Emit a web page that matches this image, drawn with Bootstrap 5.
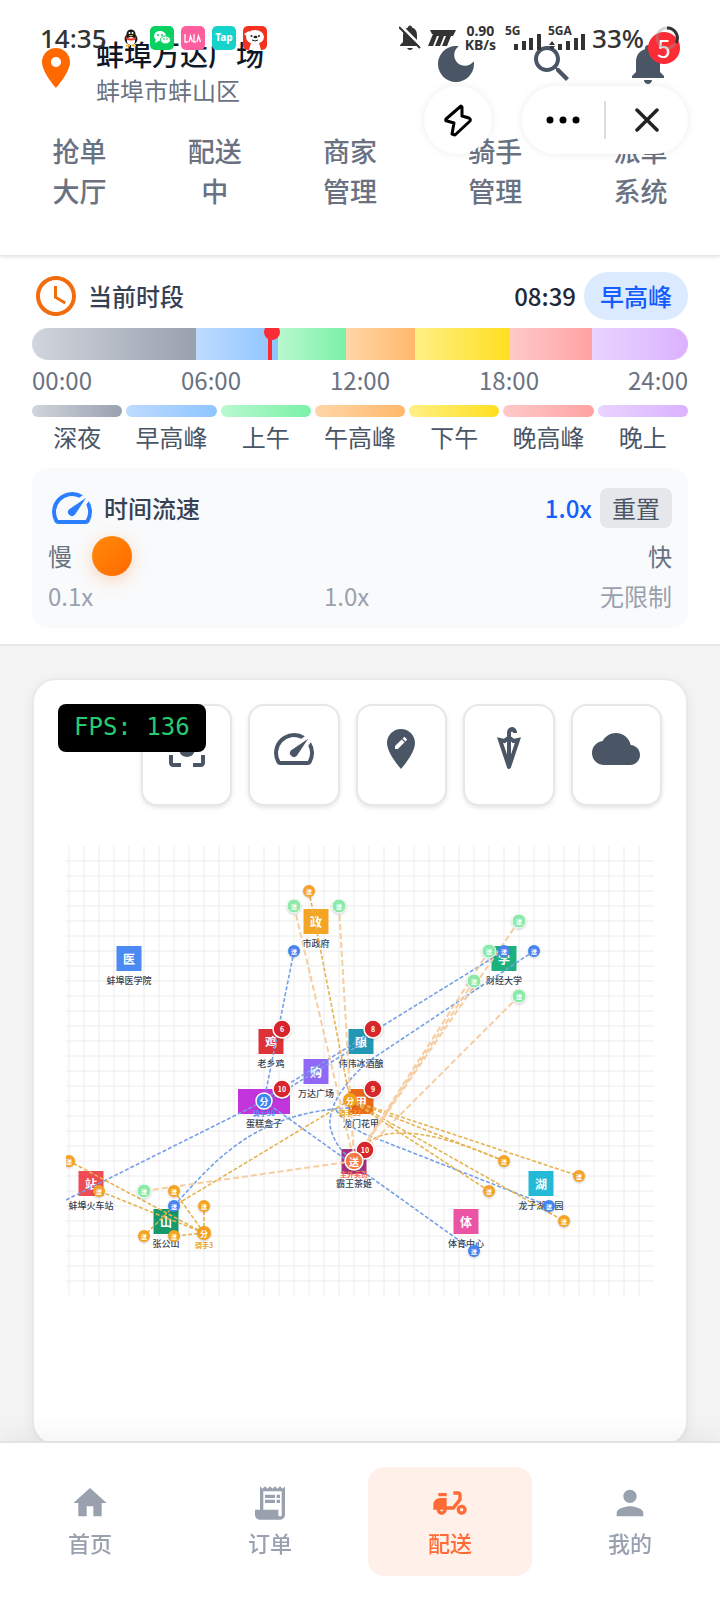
<!DOCTYPE html>
<html lang="zh-CN">
<head>
<meta charset="utf-8">
<meta name="viewport" content="width=device-width, initial-scale=1">
<title>配送</title>
<link rel="stylesheet" href="https://cdn.jsdelivr.net/npm/bootstrap@5.3.0/dist/css/bootstrap.min.css">
<style>
  body { background: #f3f3f3; color: #364153; font: 24px/36px "Noto Sans CJK SC", sans-serif; padding-bottom: 154px; }
  button { font: inherit; }
  .ico { width: 48px; height: 48px; fill: currentColor; flex: none; display: block; }
  .fw-mid { font-weight: 500; }

  /* system status strip, drawn over the page header */
  .status-strip { top: 24px; left: 0; right: 0; height: 28px; padding: 0 40px; z-index: 30; color: #333; font-family: "Noto Sans", sans-serif; font-weight: 500; font-size: 26px; line-height: 28px; pointer-events: none; }
  .app-row { gap: 7px; margin-left: 12px; }
  .app-row svg { width: 24px; height: 24px; }
  .net-speed { font-size: 14px; line-height: 14px; font-weight: 700; text-align: center; margin-left: 8px; }
  .signals { margin-left: 8px; }
  .battery-ring { margin-left: 10px; }

  /* header */
  .top-area { background: #fff; border-bottom: 1px solid #e5e7eb; box-shadow: 0 1px 4px rgba(0,0,0,.12); z-index: 2; }
  .place-row { padding: 36px 32px 0; }
  .place-name { font-size: 28px; font-weight: 500; color: #101828; }
  .place-sub { color: #6a7282; }
  .act { width: 80px; height: 48px; border: 0; background: none; padding: 0 16px; color: #4a5565; }
  .count-dot { top: -8px; right: 8px; width: 32px; height: 32px; border-radius: 50%; background: #fb2c36; color: #fff; line-height: 32px; text-align: center; }
  .tab-row { display: grid; grid-template-columns: 27fr 27fr 27fr 31fr 27fr; padding: 23px 12px 44px; }
  .tab-row a { color: #6a7282; font-size: 27px; line-height: 40px; font-weight: 500; text-align: center; text-decoration: none; }
  .floaters { top: 86px; right: 32px; gap: 30px; z-index: 20; }
  .float-pill { background: #fff; height: 68px; border-radius: 34px; box-shadow: 0 0 10px rgba(0,0,0,.08); }
  .float-pill button { border: 0; background: none; padding: 0; height: 68px; display: grid; place-items: center; }
  .float-round { width: 68px; }
  .float-wide { width: 166px; }
  .float-wide button { flex: 1; }
  .float-wide i { width: 2px; height: 38px; background: #dcdcdc; }

  /* day timeline */
  .time-area { background: #fff; border-bottom: 2px solid #e5e7eb; padding: 16px 32px; }
  .c-clock { color: #f26c0c; }
  .clock-now { color: #1e2939; font-weight: 500; }
  .phase-pill { background: #dbeafe; color: #155dfc; border-radius: 24px; padding: 6px 16px; font-weight: 500; }
  .day-bar { height: 32px; border-radius: 16px; overflow: hidden; }
  .needle { top: 0; width: 4px; height: 100%; background: #fb2c36; }
  .needle::before { content: ""; position: absolute; top: -4px; left: -4px; width: 16px; height: 16px; border-radius: 50%; background: #fb2c36; }
  .hours { color: #6a7282; margin-top: 2px; }
  .legend-grid { display: grid; grid-template-columns: repeat(7, 1fr); gap: 4px; margin-top: 7px; text-align: center; color: #4a5565; }
  .swatch { height: 12px; border-radius: 6px; margin-bottom: 2px; }
  .g-night { background: linear-gradient(90deg, #d1d5dc, #99a1af); }
  .g-rush { background: linear-gradient(90deg, #bedbff, #8ec5ff); }
  .g-morn { background: linear-gradient(90deg, #b9f8cf, #7bf1a8); }
  .g-noon { background: linear-gradient(90deg, #ffd6a8, #ffb86a); }
  .g-aft { background: linear-gradient(90deg, #fff085, #ffdf20); }
  .g-eve { background: linear-gradient(90deg, #ffc9c9, #ffa2a2); }
  .g-late { background: linear-gradient(90deg, #e9d4ff, #dab2ff); }

  /* speed panel */
  .speed-panel { background: #f9fafb; border-radius: 16px; padding: 16px; margin-top: 13px; }
  .c-blue { color: #2b7fff; }
  .rate { color: #155dfc; font-weight: 500; }
  .reset { border: 0; border-radius: 8px; background: #e5e7eb; color: #4a5565; padding: 2px 12px; }
  .slide-row { height: 48px; gap: 20px; color: #6a7282; }
  .slide-row input { flex: 1; min-width: 0; height: 40px; margin: 0; appearance: none; -webkit-appearance: none; background: transparent; }
  .slide-row input::-webkit-slider-thumb { -webkit-appearance: none; width: 40px; height: 40px; border-radius: 50%; background: linear-gradient(135deg, #ff8c0a, #ff6900); box-shadow: 0 4px 16px rgba(255,105,0,.25); }
  .slide-row input::-moz-range-thumb { width: 40px; height: 40px; border: 0; border-radius: 50%; background: #ff7a05; }
  .scale-row { color: #99a1af; line-height: 32px; }

  /* map card */
  .map-card { margin: 32px 32px 0; background: #fff; border: 2px solid #e9e9eb; border-radius: 24px; padding: 24px 24px 148px; box-shadow: 0 4px 12px rgba(0,0,0,.06); }
  .tool-row { display: grid; grid-template-columns: repeat(5, 1fr); gap: 16px; margin-left: 83px; }
  .tool-row button { height: 102px; border: 2px solid #e5e7eb; border-radius: 16px; background: #fff; color: #4a5565; padding: 0 0 12px; display: grid; place-items: center; box-shadow: 0 2px 4px rgba(0,0,0,.1); }
  .fps { top: 24px; left: 24px; background: #000; color: #25cb72; border-radius: 8px; padding: 5px 16px 7px; font-family: "DejaVu Sans Mono", monospace; z-index: 2; }
  .map { margin: 40px 8px 0; }
  .map svg { display: block; width: 100%; }
  .map text { text-anchor: middle; dominant-baseline: central; }

  /* bottom navigation */
  .dock { background: #fff; border-top: 2px solid #e2e3e6; padding: 24px 0; box-shadow: 0 -6px 24px rgba(0,0,0,.05); }
  .dock a { flex: 1; margin: 0 8px; height: 109px; padding-top: 16px; border-radius: 16px; color: #99a1af; font-size: 22px; line-height: 34px; font-weight: 500; text-decoration: none; }
  .dock a.on { background: #fff0e9; color: #ff6b35; }
  .dock .ico { width: 40px; height: 40px; margin-bottom: 2px; }
</style>
</head>
<body class="position-relative">

<div class="status-strip position-absolute d-flex align-items-center">
  <span>14:35</span>
  <div class="app-row d-flex">
    <svg viewBox="0 0 24 24"><ellipse cx="12" cy="13" rx="6.500" ry="6" fill="#222"/><circle cx="12" cy="8" r="4.500" fill="#181818"/><ellipse cx="12" cy="15" rx="4" ry="4" fill="#fff"/><path d="M7 11q5 3 10 0v2q-5 3-10 0z" fill="#e32"/><circle cx="10.500" cy="7" r="1" fill="#fff"/><circle cx="13.500" cy="7" r="1" fill="#fff"/><path d="M9.500 9h5l-2.500 1.500zM7 19h4v1.500H7zM13 19h4v1.500h-4z" fill="#fb0"/></svg>
    <svg viewBox="0 0 24 24"><rect width="24" height="24" rx="5" fill="#07d160"/><ellipse cx="10" cy="10" rx="6" ry="5" fill="#fff"/><path d="M6 13l-1 4 4-2z" fill="#fff"/><ellipse cx="15.500" cy="14" rx="5" ry="4" fill="#fff" stroke="#07d160"/><g fill="#07d160"><circle cx="8" cy="9" r="1"/><circle cx="12" cy="9" r="1"/><circle cx="14" cy="13" r=".8"/><circle cx="17" cy="13" r=".8"/></g></svg>
    <svg viewBox="0 0 24 24"><rect width="24" height="24" rx="5" fill="#ff5f9e"/><path d="M4 8v8h3M8 16l1.500-6 2 6M13 8v8h2M16 16l1.500-6 2 6" fill="none" stroke="#fff" stroke-width="1.300"/></svg>
    <svg viewBox="0 0 24 24"><rect width="24" height="24" rx="5" fill="#15d3ca"/><text x="12" y="15" font-size="10" font-weight="800" fill="#fff" text-anchor="middle">Tap</text></svg>
    <svg viewBox="0 0 24 24"><rect width="24" height="24" rx="5" fill="#f2321e"/><ellipse cx="12" cy="11" rx="9" ry="7" fill="#fff"/><path d="M1 8l5-3v7zM8 17h8l2 7H6z" fill="#fff"/><circle cx="8.500" cy="10" r="1" fill="#222"/><circle cx="16" cy="10" r="1" fill="#222"/><ellipse cx="12.500" cy="11" rx="2" ry="1.200" fill="#222"/><path d="M9 14q3 2 6 0" fill="none" stroke="#222"/></svg>
  </div>
  <div class="ms-auto d-flex align-items-center">
    <svg width="58" height="28" viewBox="0 0 58 28" fill="#333"><path d="M4 18V11q0-6 5-7.500 0-2 2-2t2 2q5 1.500 5 7.500v7l3 3v1H1v-1zM8 24h6q-1 2-3 2t-3-2z"/><path d="M2 2l22 22" stroke="#fff" stroke-width="3"/><path d="M0 3l21 21" stroke="#333" stroke-width="2"/><path d="M31 6h26l-3 6h-2l-4 10h-5l4-10h-2l-4 10h-5l4-10h-2l-4 10h-5l5-12h-1z"/></svg>
    <div class="net-speed">0.90<br>KB/s</div>
    <svg class="signals" width="84" height="28" viewBox="0 0 84 28" fill="#333"><text x="1" y="11" font-size="12" font-weight="700">5G</text><path d="M10 20h4v6h-4zM18 17h4v9h-4zM25 14h4v12h-4zM33 10h4v16h-4z"/><text x="44" y="11" font-size="12" font-weight="700">5GA</text><path d="M54 20h4v6h-4zM62 17h4v9h-4zM70 14h4v12h-4zM77 10h4v16h-4zM48 17l3 4h-6zM48 26l3-4h-6z"/></svg>
    <span class="ms-1">33%</span>
    <svg class="battery-ring" width="26" height="28" viewBox="0 0 26 28" fill="none" stroke-width="3"><circle cx="13" cy="14" r="10" stroke="#999" stroke-opacity=".4"/><path d="M13 4A10 10 0 0 1 22 19" stroke="#333"/></svg>
  </div>
</div>

<div class="floaters position-absolute d-flex">
  <div class="float-pill float-round"><button class="w-100" aria-label="快捷"><svg width="30" height="34" viewBox="0 0 30 34" fill="none" stroke="#000" stroke-width="3" stroke-linejoin="round"><path d="M18 3L3 16q-1 2 1 2l7 2-2 11 3 1L27 18q1-2-1-3l-7-2V4z"/></svg></button></div>
  <div class="float-pill float-wide d-flex align-items-center">
    <button aria-label="更多"><svg width="34" height="10" viewBox="0 0 34 10"><circle cx="4" cy="5" r="3.500"/><circle cx="17" cy="5" r="3.500"/><circle cx="30" cy="5" r="3.500"/></svg></button>
    <i></i>
    <button aria-label="关闭"><svg width="24" height="24" viewBox="0 0 24 24" stroke="#222" stroke-width="3.500" stroke-linecap="round"><path d="M2 2l20 20M22 2L2 22"/></svg></button>
  </div>
</div>

<header class="top-area position-relative">
  <div class="place-row d-flex justify-content-between">
    <div class="d-flex align-items-start">
      <svg class="ico mt-2" style="color:#ff6900" viewBox="0 0 24 24"><path d="M12 2C8.130 2 5 5.130 5 9c0 5.250 7 13 7 13s7-7.750 7-13c0-3.870-3.130-7-7-7zm0 9.500c-1.380 0-2.500-1.120-2.500-2.500s1.120-2.500 2.500-2.500 2.500 1.120 2.500 2.500-1.120 2.500-2.500 2.500z"/></svg>
      <div class="ms-3">
        <div class="place-name">蚌埠万达广场</div>
        <div class="place-sub">蚌埠市蚌山区</div>
      </div>
    </div>
    <div class="d-flex gap-3 pt-1">
      <button class="act" aria-label="夜间模式"><svg class="ico" viewBox="0 0 24 24"><path d="M12 3c-4.970 0-9 4.030-9 9s4.030 9 9 9 9-4.030 9-9c0-.46-.04-.92-.1-1.360-.98 1.370-2.580 2.260-4.400 2.260-2.980 0-5.400-2.420-5.400-5.400 0-1.810.89-3.420 2.260-4.400-.44-.06-.9-.1-1.360-.1z"/></svg></button>
      <button class="act" aria-label="搜索"><svg class="ico" viewBox="0 0 24 24"><path d="M15.500 14h-.79l-.28-.27C15.410 12.590 16 11.110 16 9.500 16 5.910 13.090 3 9.500 3S3 5.910 3 9.500 5.910 16 9.500 16c1.610 0 3.090-.59 4.230-1.570l.27.28v.79l5 4.990L20.490 19l-4.990-5zm-6 0C7.010 14 5 11.990 5 9.500S7.010 5 9.500 5 14 7.010 14 9.500 11.990 14 9.500 14z"/></svg></button>
      <button class="act position-relative" aria-label="通知"><svg class="ico" viewBox="0 0 24 24"><path d="M12 22c1.100 0 2-.9 2-2h-4c0 1.100.89 2 2 2zm6-6v-5c0-3.070-1.640-5.640-4.500-6.320V4c0-.83-.67-1.500-1.500-1.500s-1.500.67-1.500 1.500v.68C7.630 5.360 6 7.920 6 11v5l-2 2v1h16v-1l-2-2z"/></svg><span class="count-dot position-absolute">5</span></button>
    </div>
  </div>
  <nav class="tab-row">
    <a href="#">抢单<br>大厅</a><a href="#">配送<br>中</a><a href="#">商家<br>管理</a><a href="#">骑手<br>管理</a><a href="#">派单<br>系统</a>
  </nav>
</header>

<section class="time-area">
  <div class="d-flex align-items-center justify-content-between mb-2">
    <div class="d-flex align-items-center gap-2 fw-mid">
      <svg class="ico c-clock" viewBox="0 0 24 24"><path d="M11.990 2C6.470 2 2 6.480 2 12s4.470 10 9.990 10C17.520 22 22 17.520 22 12S17.520 2 11.990 2zM12 20c-4.420 0-8-3.580-8-8s3.580-8 8-8 8 3.580 8 8-3.580 8-8 8zm.5-13H11v6l5.250 3.150.75-1.230-4.500-2.670z"/></svg>
      <span>当前时段</span>
    </div>
    <div class="d-flex align-items-center gap-2">
      <span class="clock-now">08:39</span><span class="phase-pill">早高峰</span>
    </div>
  </div>
  <div class="day-bar d-flex position-relative">
    <div class="g-night" style="width:25%"></div><div class="g-rush" style="width:12.500%"></div><div class="g-morn" style="width:10.420%"></div><div class="g-noon" style="width:10.420%"></div><div class="g-aft" style="width:14.580%"></div><div class="g-eve" style="width:12.500%"></div><div class="g-late flex-fill"></div>
    <div class="needle position-absolute" style="left:36.040%"></div>
  </div>
  <div class="hours d-flex justify-content-between"><span>00:00</span><span>06:00</span><span>12:00</span><span>18:00</span><span>24:00</span></div>
  <div class="legend-grid">
    <div><div class="swatch g-night"></div>深夜</div>
    <div><div class="swatch g-rush"></div>早高峰</div>
    <div><div class="swatch g-morn"></div>上午</div>
    <div><div class="swatch g-noon"></div>午高峰</div>
    <div><div class="swatch g-aft"></div>下午</div>
    <div><div class="swatch g-eve"></div>晚高峰</div>
    <div><div class="swatch g-late"></div>晚上</div>
  </div>
  <div class="speed-panel">
    <div class="d-flex align-items-center justify-content-between">
      <div class="d-flex align-items-center gap-2 fw-mid">
        <svg class="ico c-blue" viewBox="0 0 24 24"><path id="gauge" d="M20.380 8.570l-1.230 1.850a8 8 0 0 1-.22 7.580H5.070A8 8 0 0 1 15.580 6.850l1.850-1.230A10 10 0 0 0 3.350 19a2 2 0 0 0 1.720 1h13.850a2 2 0 0 0 1.740-1 10 10 0 0 0-.27-10.440zM10.590 15.410a2 2 0 0 0 2.830 0l5.660-8.490-8.490 5.660a2 2 0 0 0 0 2.830z"/></svg>
        <label for="speed">时间流速</label>
      </div>
      <div class="d-flex align-items-center gap-2"><span class="rate">1.0x</span><button class="reset">重置</button></div>
    </div>
    <div class="slide-row d-flex align-items-center"><span>慢</span><input id="speed" type="range" min="0" max="100" value="0"><span>快</span></div>
    <div class="scale-row d-flex justify-content-between"><span>0.1x</span><span>1.0x</span><span>无限制</span></div>
  </div>
</section>

<main class="map-card position-relative">
  <div class="fps position-absolute">FPS: 136</div>
  <div class="tool-row">
    <button aria-label="居中"><svg class="ico" viewBox="0 0 24 24"><path d="M12 8c-2.210 0-4 1.790-4 4s1.790 4 4 4 4-1.790 4-4-1.790-4-4-4zm-7 7H3v4c0 1.100.9 2 2 2h4v-2H5v-4zM5 5h4V3H5c-1.100 0-2 .9-2 2v4h2V5zm14-2h-4v2h4v4h2V5c0-1.100-.9-2-2-2zm0 16h-4v2h4c1.100 0 2-.9 2-2v-4h-2v4z"/></svg></button>
    <button aria-label="速度"><svg class="ico" viewBox="0 0 24 24"><use href="#gauge"/></svg></button>
    <button aria-label="编辑地点"><svg class="ico" viewBox="0 0 24 24"><path d="M12 2C8.130 2 5 5.130 5 9c0 5.250 7 13 7 13s7-7.750 7-13c0-3.870-3.130-7-7-7zm-1.560 10H9v-1.440l3.350-3.340 1.430 1.430L10.440 12zm4.450-4.450l-.7.7-1.440-1.440.7-.7c.15-.15.39-.15.54 0l.9.9c.15.15.15.39 0 .54z"/></svg></button>
    <button aria-label="雨伞"><svg class="ico" viewBox="0 0 24 24"><path d="M14.500 6.920L13 5.770V3.880c0-.26.22-.48.5-.48s.5.210.5.480V4h2v-.12C16 2.290 14.880 1 13.500 1S11 2.290 11 3.880v1.890L9.500 6.920 6 6.070l5.050 15.250c.15.45.55.68.95.68s.8-.23.95-.69L18 6.070l-3.500.85zM13.280 8.500l.76.58.92-.23L13 14.800V8.290l.28.21zm-3.320.58l.76-.58.28-.22v6.510L9.030 8.860l.93.22z"/></svg></button>
    <button aria-label="天气"><svg class="ico" viewBox="0 0 24 24"><path d="M19.350 10.040C18.670 6.590 15.640 4 12 4 9.110 4 6.600 5.640 5.350 8.040 2.340 8.360 0 10.910 0 14c0 3.310 2.690 6 6 6h13c2.760 0 5-2.240 5-5 0-2.640-2.050-4.780-4.650-4.960z"/></svg></button>
  </div>
  <div class="map"><svg id="map" viewBox="66 846 588 450" role="img" aria-label="配送地图"></svg></div>
</main>

<nav class="dock fixed-bottom d-flex">
  <a href="#" class="d-flex flex-column align-items-center"><svg class="ico" viewBox="0 0 24 24"><path d="M10 20v-6h4v6h5v-8h3L12 3 2 12h3v8z"/></svg>首页</a>
  <a href="#" class="d-flex flex-column align-items-center"><svg class="ico" viewBox="0 0 24 24"><path d="M19.500 3.500L18 2l-1.500 1.500L15 2l-1.500 1.500L12 2l-1.500 1.500L9 2 7.500 3.500 6 2v14H3v3c0 1.660 1.340 3 3 3h12c1.660 0 3-1.340 3-3V2l-1.500 1.500zM19 19c0 .55-.45 1-1 1s-1-.45-1-1v-3H8V5h11v14z"/><path d="M9 7h6v2H9zm7 0h2v2h-2zm-7 3h6v2H9zm7 0h2v2h-2z"/></svg>订单</a>
  <a href="#" class="on d-flex flex-column align-items-center" aria-current="page"><svg class="ico" viewBox="0 0 24 24"><path d="M19 7c0-1.100-.9-2-2-2h-3v2h3v2.650L13.520 14H10V9H6c-2.210 0-4 1.790-4 4v3h2c0 1.660 1.340 3 3 3s3-1.340 3-3h4.480L19 10.350V7zM7 17c-.55 0-1-.45-1-1h2c0 .55-.45 1-1 1z"/><path d="M5 6h5v2H5zM19 13c-1.660 0-3 1.340-3 3s1.340 3 3 3 3-1.340 3-3-1.340-3-3-3zm0 4c-.55 0-1-.45-1-1s.45-1 1-1 1 .45 1 1-.45 1-1 1z"/></svg>配送</a>
  <a href="#" class="d-flex flex-column align-items-center"><svg class="ico" viewBox="0 0 24 24"><path d="M12 12c2.210 0 4-1.790 4-4s-1.790-4-4-4-4 1.790-4 4 1.790 4 4 4zm0 2c-2.670 0-8 1.340-8 4v2h16v-2c0-2.660-5.330-4-8-4z"/></svg>我的</a>
</nav>

<script>
  const out = [];
  const text = (x, y, s, size, fill, weight = 700) =>
    out.push(`<text x="${x}" y="${y}" font-size="${size}" fill="${fill}" font-weight="${weight}">${s}</text>`);

  // background grid, one cell every 15 units
  for (let x = 69; x < 650; x += 15) out.push(`<path d="M${x} 846v450" stroke="#ececee"/>`);
  for (let y = 861; y < 1296; y += 15) out.push(`<path d="M66 ${y}h588" stroke="#ececee"/>`);

  // places: glyph, label, x, y, colour, width
  const places = [
    ['医', '蚌埠医学院', 129, 958, '#4b89f3', 25], ['政', '市政府', 316, 921, '#f5a524', 25],
    ['学', '财经大学', 504, 958, '#1fb07f', 25], ['鸡', '老乡鸡', 271, 1041, '#dd3238', 25],
    ['酿', '伟伟冰酒酿', 361, 1041, '#2298b5', 25], ['购', '万达广场', 316, 1071, '#9068f5', 25],
    ['', '蛋糕盒子', 264, 1101, '#c235dc', 52], ['甲', '龙门花甲', 361, 1101, '#ea6a1c', 25],
    ['', '霸王茶姬', 354, 1161, '#a6317d', 25], ['站', '蚌埠火车站', 91, 1183, '#ee4b55', 25],
    ['山', '张公山', 166, 1221, '#169a6c', 25], ['湖', '龙子湖公园', 541, 1183, '#24bad7', 25],
    ['体', '体育中心', 466, 1221, '#ea54a2', 25]
  ];
  for (const [g, name, x, y, c, w] of places) {
    out.push(`<rect x="${x - w / 2}" y="${y - 12}" width="${w}" height="25" fill="${c}"/>`);
    if (g) text(x, y, g, 12, '#fff');
    text(x, y + 22, name, 9, '#364153', 500);
  }

  // routes
  const route = (d, c, w, dash) => out.push(`<path d="${d}" fill="none" stroke="${c}" stroke-width="${w}" stroke-dasharray="${dash}"/>`);
  const blue = ['M294 951L264 1101', 'M504 951L264 1099', 'M264 1103L361 1044', 'M66 1200L264 1101', 'M264 1101L474 1251',
    'M534 951L372 1059C345 1080 325 1110 331 1130Q337 1150 354 1161', 'M174 1206C215 1160 255 1112 350 1108', 'M336 1110Q350 1130 375 1138L549 1206'];
  const amber = ['M309 891L350 1100', 'M350 1100L504 1161', 'M350 1100L579 1176', 'M350 1100L489 1191', 'M350 1100L564 1221',
    'M354 1161Q375 1105 504 1161', 'M350 1100L174 1206L144 1236', 'M204 1233L69 1161', 'M204 1233L99 1191', 'M204 1233L174 1191', 'M204 1233V1206', 'M204 1233L174 1236'];
  const peach = ['M294 906L354 1161', 'M339 906L354 1161', 'M144 1191L354 1161', 'M519 921L354 1161', 'M489 951L354 1161', 'M474 981L354 1161', 'M519 996L354 1161'];
  blue.forEach(d => route(d, '#75a0e6', 1.6, '4 2'));
  amber.forEach(d => route(d, '#e6b351', 1.6, '4 2'));
  peach.forEach(d => route(d, '#f7cda2', 2, '6 3'));

  // rider names
  text(264, 1113, '骑手50', 7, '#4b89f3');
  text(350, 1113, '骑手33', 7, '#eb9f22');
  text(204, 1245, '骑手3', 7, '#eb9f22');
  text(354, 1174, '主外卖员', 7, '#fa6f50');

  // delivery points and riders
  const dot = (x, y, r, c, s, size, edge = 0) => {
    out.push(`<circle cx="${x}" cy="${y}" r="${r}" fill="${c}" stroke="#fff" stroke-width="${edge}" style="filter:drop-shadow(0 1px 1px rgba(0,0,0,.2))"/>`);
    text(x, y, s, size, '#fff');
  };
  [[309, 891], [69, 1161], [99, 1191], [174, 1191], [204, 1206], [144, 1236], [174, 1236], [504, 1161], [579, 1176], [489, 1191], [564, 1221]]
    .forEach(([x, y]) => dot(x, y, 6, '#f4a325', '送', 6));
  [[294, 906], [339, 906], [519, 921], [489, 951], [474, 981], [519, 996], [144, 1191]]
    .forEach(([x, y]) => dot(x, y, 7, '#8ceaa9', '送', 6, 1));
  [[294, 951], [504, 951], [534, 951], [174, 1206], [549, 1206], [474, 1251]]
    .forEach(([x, y]) => dot(x, y, 6, '#4484f2', '送', 6));
  dot(204, 1233, 7, '#f4a01c', '分', 8);
  dot(350, 1100, 7, '#f4a01c', '分', 8);
  dot(264, 1101, 8, '#3e86f6', '分', 9, 1.5);
  [[282, 1029, 6], [373, 1029, 8], [282, 1089, 10], [373, 1089, 9], [365, 1150, 10]]
    .forEach(([x, y, n]) => dot(x, y, 9, '#d7262b', n, 7, 1.5));
  dot(354, 1161, 9, '#f47a45', '送', 10, 1.5);

  document.getElementById('map').innerHTML = out.join('');
</script>
<script src="https://cdn.jsdelivr.net/npm/bootstrap@5.3.0/dist/js/bootstrap.bundle.min.js"></script>
</body>
</html>
